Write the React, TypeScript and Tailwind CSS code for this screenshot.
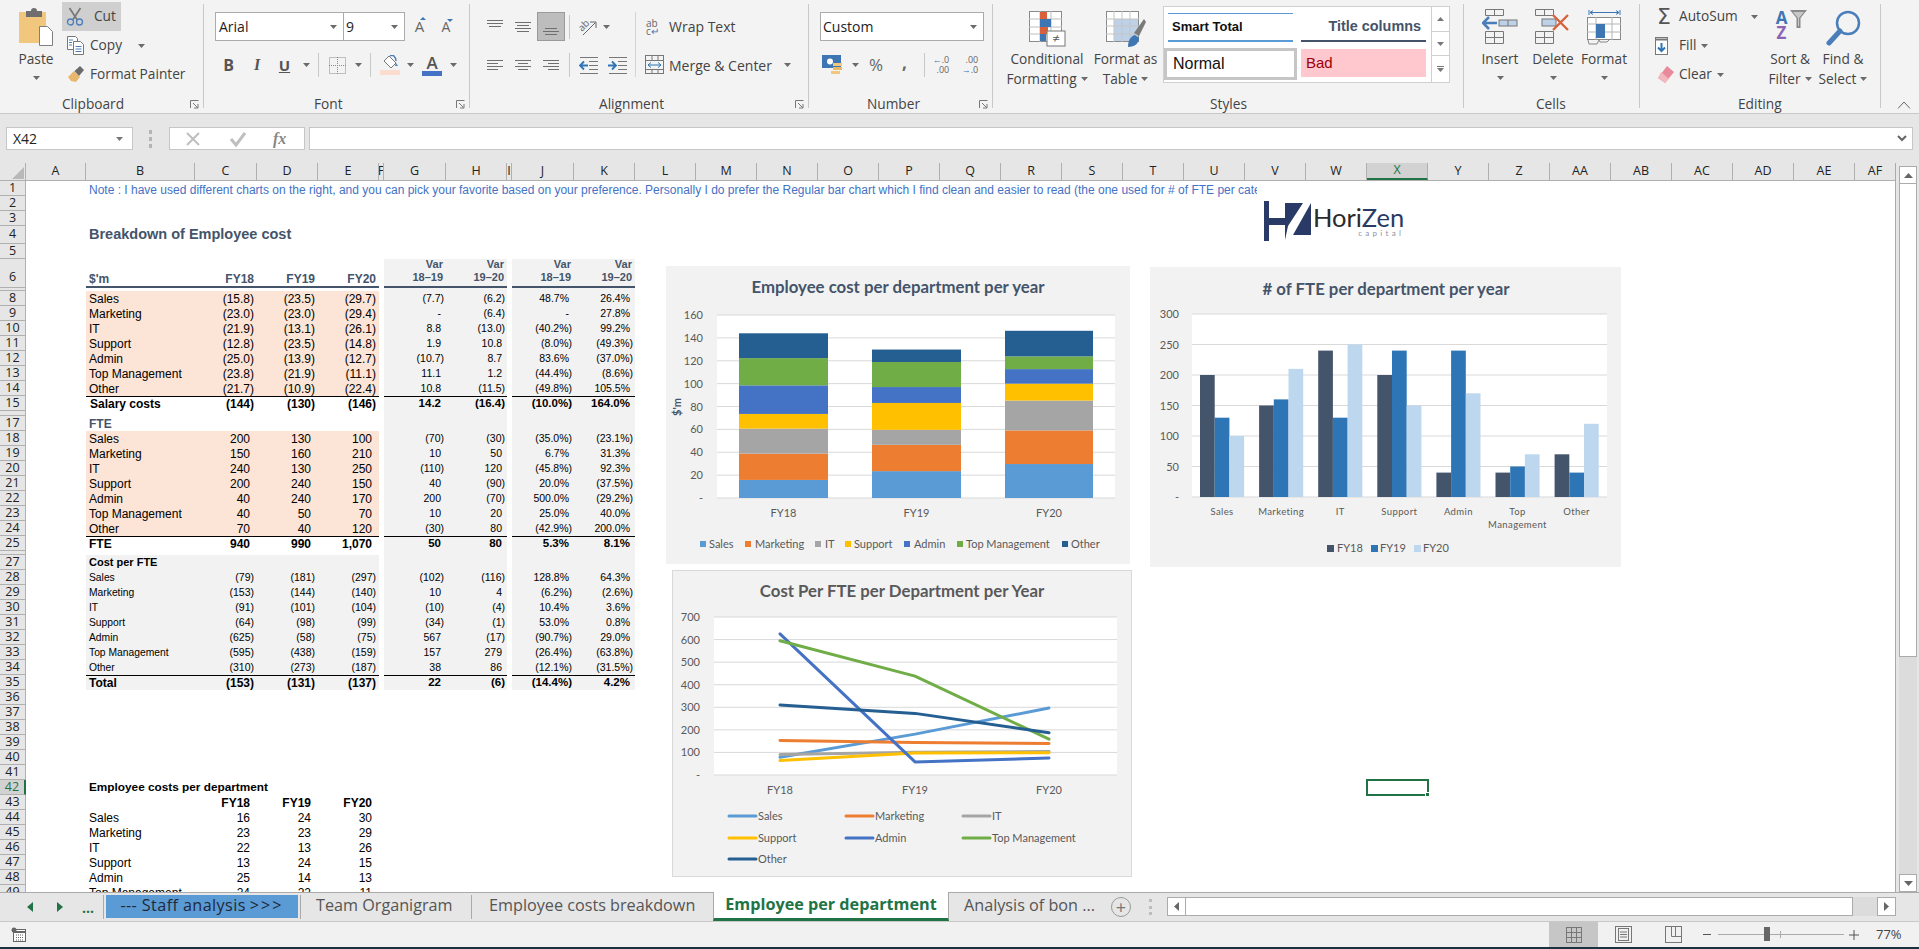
import React from 'react';

const Caret = ({ c = '#6b6b6b' }: { c?: string }) => (
  <svg width="7" height="4" viewBox="0 0 7 4" className="shrink-0"><path d="M0 0h7L3.5 4z" fill={c} /></svg>
);
const S = ({ cls, children }: { cls: string; children?: React.ReactNode }) => (
  <div className={`flex items-center justify-center shrink-0 ${cls}`}>{children}</div>
);
const VSep = ({ cls = 'h-[24px]' }: { cls?: string }) => <div className={`w-px bg-[#c8c8c8] ${cls}`} />;
const Launcher = ({ cls }: { cls: string }) => (
  <svg width="9" height="9" viewBox="0 0 9 9" className={`shrink-0 ml-auto ${cls}`} fill="none" stroke="#777">
    <path d="M.5 8V.5H8.5" /><path d="M3 3l4.5 4.5M4 8h4V4" />
  </svg>
);
const Lines = ({ rows, w = 18, h = 12 }: { rows: number[][]; w?: number; h?: number }) => (
  <svg width={w} height={h} viewBox={`0 0 ${w} ${h}`} stroke="#6f6f6f" strokeWidth="1">
    {rows.map((r, i) => <line key={i} x1={r[0]} x2={r[1]} y1={r[2] + 0.5} y2={r[2] + 0.5} />)}
  </svg>
);

const PasteIcon = () => (
  <svg width="34" height="38" viewBox="0 0 34 38">
    <rect x="0" y="4" width="27" height="31" fill="#f0c77c" />
    <path d="M7 3h5a3 3 0 0 1 6 0h5v6H7z" fill="#6e6e6e" />
    <path d="M20.5 18.5h8l5 5v14h-13z" fill="#fff" stroke="#7f7f7f" />
  </svg>
);
const Scissors = () => (
  <svg width="18" height="19" viewBox="0 0 18 19" fill="none">
    <path d="M3.5 1l7.5 11.5M14.5 1L7 12.5" stroke="#777" strokeWidth="1.7" />
    <circle cx="4.5" cy="15" r="3" stroke="#4a7ebb" strokeWidth="1.3" />
    <circle cx="13.5" cy="15" r="3" stroke="#4a7ebb" strokeWidth="1.3" />
  </svg>
);
const CopyIcon = () => (
  <svg width="17" height="19" viewBox="0 0 17 19" fill="#fff" stroke="#777">
    <path d="M.5.5h8l2 2v11h-10z" />
    <path d="M6.5 5.5h7l3 3v10h-10z" />
    <path d="M2 4h4M2 6.5h3M2 9h3M8.5 10.5h6M8.5 13h6M8.5 15.5h6" stroke="#4a7ebb" />
  </svg>
);
const Painter = () => (
  <svg width="18" height="17" viewBox="0 0 18 17">
    <path d="M1 11l6-6 6 6-4 5-5-1z" fill="#e9b66d" />
    <path d="M7.5 5L13 0l4 4-5 6z" fill="#6b6b6b" />
  </svg>
);
const BorderIcon = () => (
  <svg width="17" height="17" viewBox="0 0 17 17" fill="none" stroke="#8a8a8a" strokeDasharray="1 1">
    <rect x=".5" y=".5" width="16" height="16" /><path d="M8.5 0v17M0 8.5h17" />
  </svg>
);
const FillIcon = () => (
  <div className="flex flex-col items-center w-[20px]">
    <svg width="18" height="15" viewBox="0 0 18 15" fill="none">
      <path d="M8 1l7 7-5 5-7-7z" fill="#fff" stroke="#777" />
      <path d="M9 1c3-2 6 1 6 5" stroke="#4a7ebb" strokeWidth="1.5" />
      <path d="M15 8l2 3-3 0z" fill="#4a7ebb" />
    </svg>
    <div className="w-[20px] h-[5px] bg-[#fbdcce]" />
  </div>
);
const OrientIcon = () => (
  <svg width="20" height="20" viewBox="0 0 20 20" fill="none">
    <text x="1" y="12" fontSize="10" fontFamily="Open Sans" fill="#666" transform="rotate(-45 6 10)">ab</text>
    <path d="M5 18L17 6M12 5h6v6" stroke="#666" />
  </svg>
);
const Indent = ({ rev }: { rev?: boolean }) => (
  <svg width="19" height="17" viewBox="0 0 19 17" fill="none" stroke="#777">
    <path d="M1 .5h18M10 4.5h9M10 8.5h9M10 12.5h9M1 16.5h18" />
    {rev ? <path d="M1 8.5h8M5 4.5l-4 4 4 4" stroke="#2e75b6" strokeWidth="1.8" /> : <path d="M0 8.5h7M4 4.5l4 4-4 4" stroke="#2e75b6" strokeWidth="1.8" />}
  </svg>
);
const MergeIcon = () => (
  <svg width="20" height="20" viewBox="0 0 20 20" fill="none" stroke="#777">
    <rect x=".5" y=".5" width="18" height="18" />
    <path d="M.5 5.5h18M.5 14.5h18M7 .5v5M13 .5v5M7 14.5v4M13 14.5v4" />
    <path d="M3 10h13M6 7.5L3 10l3 2.5M13 7.5l3 2.5-3 2.5" stroke="#2e75b6" />
  </svg>
);
const Money = () => (
  <svg width="22" height="21" viewBox="0 0 22 21">
    <rect x="0" y="0" width="19" height="13" fill="#3e76b4" />
    <circle cx="8" cy="6.5" r="3" fill="#fff" />
    <rect x="11" y="8" width="9" height="3" fill="#f0c77c" /><rect x="11" y="12" width="9" height="3" fill="#eab765" />
    <rect x="9" y="16" width="9" height="3" fill="#f0c77c" />
  </svg>
);
const CondIcon = () => (
  <svg width="37" height="36" viewBox="0 0 37 36">
    <rect x=".5" y=".5" width="32" height="30" fill="#fff" stroke="#8a8a8a" />
    <path d="M11 0v31M22 0v31M0 8h33M0 16h33M0 23h33" stroke="#bdbdbd" fill="none" />
    <rect x="11" y="1" width="7" height="7" fill="#d9603a" /><rect x="11" y="8" width="11" height="8" fill="#3e76b4" />
    <rect x="11" y="16" width="8" height="7" fill="#d9603a" /><rect x="11" y="23" width="6" height="7" fill="#3e76b4" />
    <rect x="18" y="20" width="18" height="15" fill="#fff" stroke="#777" />
    <text x="27" y="32" fontSize="13" textAnchor="middle" fill="#555" fontFamily="Open Sans">≠</text>
  </svg>
);
const TableIcon = () => (
  <svg width="40" height="36" viewBox="0 0 40 36">
    <rect x=".5" y=".5" width="32" height="30" fill="#fff" stroke="#8a8a8a" />
    <rect x="8" y="8" width="24" height="22" fill="#bdd2e8" />
    <path d="M8 0v31M16 0v31M24 0v31M0 8h33M0 15h33M0 23h33" stroke="#c4c4c4" fill="none" />
    <path d="M28 22L38 8l2 3-7 14z" fill="#7a7a7a" />
    <path d="M22 36c0-7 3-11 7-12l4 3c0 5-4 9-11 9z" fill="#3e76b4" />
  </svg>
);
const InsertIcon = () => (
  <svg width="36" height="36" viewBox="0 0 36 36" fill="none" stroke="#777">
    <path d="M3.5.5h18v6h-18zM12.5.5v6M3.5 22.5h18v12h-18zM3.5 28.5h18M12.5 22.5v12" />
    <rect x="17" y="11" width="18" height="6" fill="#bdd2e8" /><path d="M26 11v6" />
    <path d="M1 14h14M7 8l-6 6 6 6" stroke="#4a7ebb" strokeWidth="2.5" />
  </svg>
);
const DeleteIcon = () => (
  <svg width="36" height="36" viewBox="0 0 36 36" fill="none" stroke="#777">
    <path d="M.5.5h18v6H.5zM9.5.5v6M.5 22.5h18v12H.5zM.5 28.5h18M9.5 22.5v12" />
    <rect x="7" y="10" width="14" height="7" fill="#bdd2e8" />
    <path d="M18 6l15 15M33 6L18 21" stroke="#d9603a" strokeWidth="2.3" />
  </svg>
);
const FormatIcon = () => (
  <svg width="35" height="37" viewBox="0 0 35 37" fill="none" stroke="#888">
    <path d="M2 1v5M33 1v5M3 3.5h29M3 3.5l3-2M3 3.5l3 2M32 3.5l-3-2M32 3.5l-3 2" stroke="#3e76b4" />
    <rect x=".5" y="8.5" width="33" height="22" fill="#fff" />
    <path d="M9 8v23M25 8v23M0 15h34M0 23h34" stroke="#b5b5b5" />
    <rect x="9" y="15" width="9" height="14" fill="#3e76b4" stroke="none" />
    <path d="M1 31l1 4h8l2-4M12 31l1 2h7l2-2" />
  </svg>
);
const FillDown = () => (
  <svg width="13" height="18" viewBox="0 0 13 18" fill="#fff" stroke="#777">
    <rect x=".5" y=".5" width="12" height="17" /><path d="M0 2.5h13" strokeWidth="2" />
    <path d="M6.5 6v8M3 10.5L6.5 14 10 10.5" stroke="#2e75b6" strokeWidth="2" fill="none" />
  </svg>
);
const Eraser = () => (
  <svg width="17" height="18" viewBox="0 0 17 18">
    <path d="M10 0l7 6-9 11-7-5z" fill="#e98a9a" /><path d="M4 6l8 7-4 4-7-5z" fill="#f2b8c0" />
  </svg>
);
const Funnel = () => (
  <svg width="17" height="18" viewBox="0 0 17 18">
    <path d="M0 0h17L10.5 8v10h-4V8z" fill="#8a8a8a" />
    <path d="M3 2h11l-5 6v8H8V8z" fill="#c8c8c8" />
  </svg>
);
const Magnifier = () => (
  <svg width="35" height="36" viewBox="0 0 35 36" fill="none">
    <circle cx="22" cy="13" r="11" stroke="#4a7ebb" strokeWidth="2.5" />
    <path d="M14 21L3 33" stroke="#4a7ebb" strokeWidth="5" strokeLinecap="round" />
  </svg>
);

const TextRow = ({ cls, children }: { cls?: string; children: React.ReactNode }) => (
  <div className={`h-[20px] leading-[20px] whitespace-nowrap flex items-center justify-center gap-[4px] ${cls ?? ''}`}>{children}</div>
);

const Group = ({ cls, label, labelCls, launch, children }: { cls: string; label: string; labelCls: string; launch?: string; children: React.ReactNode }) => (
  <div className={`h-[104px] shrink-0 flex flex-col border-r border-[#c8c8c8] ${cls}`}>
    <div className="h-[93px] shrink-0 flex">{children}</div>
    <div className={`h-[14px] shrink-0 leading-[14px] flex items-center whitespace-nowrap ${labelCls}`}>
      <span>{label}</span>
      {launch && <Launcher cls={launch} />}
    </div>
  </div>
);

const ARIAL = 'font-[Liberation_Sans,Arial,sans-serif]';

function Ribbon() {
  return (
    <div className="h-[114px] shrink-0 bg-[#f3f3f3] border-b border-[#c8c8c8] pt-[4px] flex">
      <Group cls="w-[204px]" label="Clipboard" labelCls="pl-[62px]" launch="mr-[4px]">
        <div className="w-[62px] pl-[10px] flex flex-col items-center pt-[4px]">
          <PasteIcon />
          <div className="mt-[4px] h-[18px] leading-[18px]">Paste</div>
          <div className="mt-[8px]"><Caret /></div>
        </div>
        <div className="flex flex-col -mt-[2px]">
          <div className="w-[59px] h-[29px] bg-[#cfcfcf] flex items-center pl-[4px] gap-[10px]"><Scissors /><span>Cut</span></div>
          <div className="h-[29px] flex items-center pl-[5px] gap-[6px]"><CopyIcon /><span>Copy</span><div className="ml-[10px]"><Caret /></div></div>
          <div className="h-[29px] flex items-center pl-[5px] gap-[5px] whitespace-nowrap"><Painter /><span>Format Painter</span></div>
        </div>
      </Group>

      <Group cls="w-[266px]" label="Font" labelCls="pl-[110px]" launch="mr-[4px]">
        <div className="pl-[11px] pt-[8px] flex flex-col">
          <div className="flex h-[29px]">
            <div className="w-[129px] border border-[#ababab] bg-white flex items-center pl-[3px] pr-[6px] text-[#222] text-[14px] justify-between"><span>Arial</span><Caret /></div>
            <div className="w-[62px] -ml-px border border-[#ababab] bg-white flex items-center pl-[2px] pr-[6px] text-[#222] text-[14px] justify-between"><span>9</span><Caret /></div>
            <S cls="w-[29px]">
              <span className="text-[15px] text-[#666] relative">A<svg width="6" height="3" viewBox="0 0 6 3" className="absolute -right-[2px] top-[2px]"><path d="M0 3l3-3 3 3z" fill="#3e76b4" /></svg></span>
            </S>
            <S cls="w-[24px]">
              <span className="text-[14px] text-[#666] relative">A<svg width="6" height="3" viewBox="0 0 6 3" className="absolute -right-[3px] top-[3px]"><path d="M0 0h6L3 3z" fill="#3e76b4" /></svg></span>
            </S>
          </div>
          <div className="flex h-[24px] mt-[12px]">
            <S cls="w-[27px] font-bold text-[16px] text-[#555]">B</S>
            <S cls="w-[30px] italic font-bold text-[16px] text-[#555] font-[Liberation_Serif,serif]">I</S>
            <S cls="w-[25px] font-bold text-[15px] text-[#555] underline">U</S>
            <S cls="w-[18px]"><Caret /></S>
            <S cls="w-[6px]"><VSep /></S>
            <S cls="w-[32px]"><BorderIcon /></S>
            <S cls="w-[10px]"><Caret /></S>
            <S cls="w-[14px]"><VSep /></S>
            <S cls="w-[26px]"><FillIcon /></S>
            <S cls="w-[14px]"><Caret /></S>
            <S cls="w-[30px]">
              <div className="flex flex-col items-center"><span className="text-[17px] leading-[17px] font-semibold text-[#555]">A</span><div className="w-[20px] h-[5px] bg-[#4472c4]" /></div>
            </S>
            <S cls="w-[12px]"><Caret /></S>
          </div>
        </div>
      </Group>

      <Group cls="w-[339px]" label="Alignment" labelCls="pl-[129px]" launch="mr-[4px]">
        <div className="pl-[11px] pt-[8px] w-[165px] flex flex-col">
          <div className="flex h-[29px]">
            <S cls="w-[28px] pb-[7px]"><Lines rows={[[1, 17, 1], [1, 17, 4], [3, 15, 7]]} h={8} /></S>
            <S cls="w-[28px]"><Lines rows={[[1, 17, 1], [3, 15, 4], [1, 17, 7], [3, 15, 10]]} /></S>
            <S cls="w-[28px] bg-[#bdbdbd] border border-[#9a9a9a] pt-[8px]"><Lines rows={[[3, 15, 1], [1, 17, 4], [3, 15, 7]]} h={8} /></S>
            <S cls="w-[8px]"><VSep /></S>
            <S cls="w-[30px]"><OrientIcon /></S>
            <S cls="w-[6px]"><Caret /></S>
          </div>
          <div className="flex h-[24px] mt-[12px]">
            <S cls="w-[28px]"><Lines rows={[[1, 17, 1], [1, 12, 4], [1, 17, 7], [1, 12, 10]]} /></S>
            <S cls="w-[28px]"><Lines rows={[[1, 17, 1], [4, 14, 4], [1, 17, 7], [4, 14, 10]]} /></S>
            <S cls="w-[28px]"><Lines rows={[[1, 17, 1], [6, 17, 4], [1, 17, 7], [6, 17, 10]]} /></S>
            <S cls="w-[8px]"><VSep /></S>
            <S cls="w-[30px]"><Indent rev /></S>
            <S cls="w-[28px]"><Indent /></S>
          </div>
        </div>
        <div className="mt-[8px] w-px h-[65px] bg-[#d4d4d4]" />
        <div className="pt-[8px] flex flex-col">
          <div className="h-[29px] flex items-center pl-[10px] whitespace-nowrap text-[14px]">
            <div className="w-[23px] leading-[8px] text-[10px] text-[#666]">ab<br />c<span className="text-[#3e76b4]">↵</span></div>
            <span>Wrap Text</span>
          </div>
          <div className="h-[24px] mt-[12px] flex items-center pl-[9px] whitespace-nowrap text-[14px]">
            <div className="w-[24px]"><MergeIcon /></div>
            <span>Merge &amp; Center</span>
            <div className="ml-[12px]"><Caret /></div>
          </div>
        </div>
      </Group>

      <Group cls="w-[184px]" label="Number" labelCls="pl-[58px]" launch="mr-[4px]">
        <div className="pl-[11px] pt-[8px] flex flex-col">
          <div className="w-[164px] h-[29px] border border-[#ababab] bg-white flex items-center justify-between pl-[2px] pr-[6px] text-[14px] text-[#222]"><span>Custom</span><Caret /></div>
          <div className="flex h-[24px] mt-[12px]">
            <S cls="w-[26px]"><Money /></S>
            <S cls="w-[18px]"><Caret /></S>
            <S cls="w-[24px] text-[17px] text-[#666]">%</S>
            <S cls="w-[33px] text-[17px] font-bold text-[#666] pb-[4px]">,</S>
            <S cls="w-[6px]"><VSep /></S>
            <S cls="w-[28px]"><div className="text-[9px] leading-[10px] text-[#666] text-right"><span className="text-[#3e76b4]">←</span>.0<br />.00</div></S>
            <S cls="w-[30px]"><div className="text-[9px] leading-[10px] text-[#666] text-right">.00<br /><span className="text-[#3e76b4]">→</span>.0</div></S>
          </div>
        </div>
      </Group>

      <Group cls="w-[471px]" label="Styles" labelCls="pl-[217px]">
        <div className="ml-[13px] w-[82px] pt-[7px] flex flex-col items-center">
          <div className="h-[36px] mb-[2px]"><CondIcon /></div>
          <TextRow>Conditional</TextRow>
          <TextRow>Formatting<Caret /></TextRow>
        </div>
        <div className="w-[75px] pt-[7px] flex flex-col items-center">
          <div className="h-[36px] mb-[2px]"><TableIcon /></div>
          <TextRow>Format as</TextRow>
          <TextRow>Table<Caret /></TextRow>
        </div>
        <div className="mt-[2px] w-[287px] h-[77px] border border-[#d0d0d0] bg-white flex">
          <div className="w-[268px] flex flex-col">
            <div className={`mt-[6px] ml-[4px] flex h-[29px] font-bold text-[13px] ${ARIAL}`}>
              <div className="w-[125px] border-t border-b-2 border-[#5b9bd5] flex items-center pl-[4px] text-[#111] text-[13px]">Smart Total</div>
              <div className="ml-[8px] w-[125px] border-b-2 border-[#44546a] flex items-center justify-end pr-[5px] text-[#44546a] text-[14.4px]">Title columns</div>
            </div>
            <div className={`mt-[6px] flex h-[32px] text-[16px] ${ARIAL}`}>
              <div className="w-[133px] border-[3px] border-[#c6c6c6] flex items-center pl-[6px] text-[#111]">Normal</div>
              <div className="ml-[4px] mt-px w-[125px] h-[28px] bg-[#ffc7ce] flex items-center pl-[5px] text-[#9c0006] text-[15px]">Bad</div>
            </div>
          </div>
          <div className="w-[18px] border-l border-[#d0d0d0] flex flex-col">
            <S cls="h-[25px] border-b border-[#d0d0d0]"><svg width="7" height="4" viewBox="0 0 7 4"><path d="M0 4h7L3.5 0z" fill="#777" /></svg></S>
            <S cls="h-[24px] border-b border-[#d0d0d0]"><Caret c="#777" /></S>
            <S cls="flex-1 flex-col gap-[1px]"><div className="w-[7px] h-px bg-[#777]" /><Caret c="#777" /></S>
          </div>
        </div>
      </Group>

      <Group cls="w-[176px]" label="Cells" labelCls="pl-[72px]">
        {[
          { t: 'Insert', cls: 'ml-[10px] w-[52px]', i: <InsertIcon /> },
          { t: 'Delete', cls: 'w-[54px]', i: <DeleteIcon /> },
          { t: 'Format', cls: 'w-[48px]', i: <FormatIcon /> },
        ].map((x) => (
          <div key={x.t} className={`${x.cls} pt-[5px] flex flex-col items-center`}>
            <div className="h-[36px] mb-[4px]">{x.i}</div>
            <TextRow>{x.t}</TextRow>
            <div className="mt-[7px]"><Caret /></div>
          </div>
        ))}
      </Group>

      <Group cls="w-[241px]" label="Editing" labelCls="pl-[98px]">
        <div className="w-[122px] pl-[15px] -mt-[2px] flex flex-col">
          <div className="h-[29px] flex items-center"><span className="w-[24px] pl-[2px] text-[22px] leading-none text-[#555] font-[DejaVu_Sans,sans-serif]">Σ</span><span>AutoSum</span><div className="ml-[13px]"><Caret /></div></div>
          <div className="h-[29px] flex items-center"><div className="w-[24px]"><FillDown /></div><span>Fill</span><div className="ml-[5px]"><Caret /></div></div>
          <div className="h-[29px] flex items-center"><div className="w-[24px] pl-[2px]"><Eraser /></div><span>Clear</span><div className="ml-[5px]"><Caret /></div></div>
        </div>
        <div className="w-[56px] pt-[6px] flex flex-col items-center">
          <div className="h-[33px] mb-[6px] flex">
            <div className="flex flex-col items-center leading-[15px] text-[17px] font-bold w-[17px]"><span className="text-[#3e76b4]">A</span><span className="text-[#8d63b5]">Z</span></div>
            <Funnel />
          </div>
          <TextRow>Sort &amp;</TextRow>
          <TextRow>Filter<Caret /></TextRow>
        </div>
        <div className="w-[50px] pt-[6px] flex flex-col items-center">
          <div className="h-[36px] mb-[3px]"><Magnifier /></div>
          <TextRow>Find &amp;</TextRow>
          <TextRow>Select<Caret /></TextRow>
        </div>
      </Group>

      <svg width="14" height="8" viewBox="0 0 14 8" fill="none" stroke="#666" className="ml-[16px] mt-[97px]"><path d="M1 7.5L7 1l6 6.5" /></svg>
    </div>
  );
}

function FormulaBar() {
  return (
    <div className="h-[49px] shrink-0 bg-[#e6e6e6] pt-[13px] flex">
      <div className="ml-[6px] w-[127px] h-[23px] bg-white border border-[#c6c6c6] flex items-center justify-between pl-[6px] pr-[9px] text-[#222] text-[14px]"><span>X42</span><Caret c="#777" /></div>
      <div className="ml-[16px] w-[3px] h-[18px] mt-[3px] border-y-[4px] border-[#b5b5b5] bg-[#e6e6e6] flex items-center"><div className="w-[3px] h-[4px] bg-[#b5b5b5]" /></div>
      <div className="ml-[17px] w-[136px] h-[23px] bg-white border border-[#c6c6c6] flex items-center">
        <svg width="16" height="16" viewBox="0 0 16 16" className="ml-[15px]" stroke="#bfbfbf" strokeWidth="2" fill="none"><path d="M2 2l12 12M14 2L2 14" /></svg>
        <svg width="18" height="16" viewBox="0 0 18 16" className="ml-[28px]" stroke="#bfbfbf" strokeWidth="3" fill="none"><path d="M2 8l5 6L16 2" /></svg>
        <span className="ml-[26px] font-[Liberation_Serif,serif] italic font-bold text-[16px] text-[#888]">fx</span>
      </div>
      <div className="ml-[4px] w-[1604px] h-[23px] bg-white border border-[#c6c6c6] flex items-center justify-end pr-[5px]">
        <svg width="10" height="7" viewBox="0 0 10 7" fill="none" stroke="#666" strokeWidth="2"><path d="M1 1l4 4 4-4" /></svg>
      </div>
    </div>
  );
}

const cols: [string, string][] = [
  ['A', 'w-[60px]'], ['B', 'w-[109px]'], ['C', 'w-[62px]'], ['D', 'w-[61px]'], ['E', 'w-[61px]'], ['F', 'w-[5px]'], ['G', 'w-[62px]'], ['H', 'w-[61px]'], ['I', 'w-[5px]'], ['J', 'w-[62px]'], ['K', 'w-[61px]'],
  ['L', 'w-[61px]'], ['M', 'w-[61px]'], ['N', 'w-[61px]'], ['O', 'w-[61px]'], ['P', 'w-[61px]'], ['Q', 'w-[61px]'], ['R', 'w-[61px]'], ['S', 'w-[61px]'], ['T', 'w-[61px]'], ['U', 'w-[61px]'], ['V', 'w-[61px]'], ['W', 'w-[61px]'], ['X', 'w-[61px]'], ['Y', 'w-[61px]'], ['Z', 'w-[61px]'], ['AA', 'w-[61px]'], ['AB', 'w-[61px]'], ['AC', 'w-[61px]'], ['AD', 'w-[61px]'], ['AE', 'w-[61px]'], ['AF', 'w-[41px]'],
];

type Row = {
  n: string; h: string; left?: string; right?: boolean; top?: boolean; label?: string; labelCls?: string; c?: string[]; cCls?: string; v?: string[]; vCls?: string; under?: boolean; sel?: boolean; end?: boolean;
};
const PEACH = 'bg-[#fce4d6]';
const GREY = 'bg-[#f2f2f2]';
const H15 = 'h-[15px]';
const blk = 'font-bold text-black';
const peachRows = (rows: [string, string, string[], string[]][]): Row[] => rows.map(([n, label, c, v]) => ({ n, h: H15, left: PEACH, right: true, label, labelCls: 'text-[12px]', c, cCls: 'text-[12px]', v, vCls: 'text-[10.5px]' }));
const greyRows = (rows: [string, string, string[], string[]][]): Row[] => rows.map(([n, label, c, v]) => ({ n, h: H15, left: GREY, right: true, label, labelCls: 'text-[10.3px]', c, cCls: 'text-[10.5px]', v, vCls: 'text-[10.5px]' }));
const plainRows = (rows: [string, string, string[]][]): Row[] => rows.map(([n, label, c]) => ({ n, h: H15, label, labelCls: 'text-[12px]', c, cCls: 'text-[12px]' }));

const rows: Row[] = [
  { n: '1', h: H15 }, { n: '2', h: H15 }, { n: '3', h: H15 },
  { n: '4', h: 'h-[18px]', label: 'Breakdown of Employee cost', labelCls: 'font-bold text-[14.5px] text-[#44546a]' },
  { n: '5', h: H15 },
  { n: '6', h: 'h-[29px]', right: true, under: true, label: "$'m", labelCls: 'font-bold text-[12px] leading-[14px] text-[#44546a] self-end', c: ['FY18', 'FY19', 'FY20'], cCls: 'font-bold text-[12px] leading-[14px] text-[#44546a] self-end', end: true },
  { n: '', h: 'h-[3px]', right: true },
  ...peachRows([
    ['8', 'Sales', ['(15.8)', '(23.5)', '(29.7)'], ['(7.7)', '(6.2)', '48.7%', '26.4%']],
    ['9', 'Marketing', ['(23.0)', '(23.0)', '(29.4)'], ['-', '(6.4)', '-', '27.8%']],
    ['10', 'IT', ['(21.9)', '(13.1)', '(26.1)'], ['8.8', '(13.0)', '(40.2%)', '99.2%']],
    ['11', 'Support', ['(12.8)', '(23.5)', '(14.8)'], ['1.9', '10.8', '(8.0%)', '(49.3%)']],
    ['12', 'Admin', ['(25.0)', '(13.9)', '(12.7)'], ['(10.7)', '8.7', '83.6%', '(37.0%)']],
    ['13', 'Top Management', ['(23.8)', '(21.9)', '(11.1)'], ['11.1', '1.2', '(44.4%)', '(8.6%)']],
    ['14', 'Other', ['(21.7)', '(10.9)', '(22.4)'], ['10.8', '(11.5)', '(49.8%)', '105.5%']],
  ]),
  { n: '15', h: H15, top: true, right: true, label: 'Salary costs', labelCls: `${blk} text-[12px] pl-[1px]`, c: ['(144)', '(130)', '(146)'], cCls: `${blk} text-[12px]`, v: ['14.2', '(16.4)', '(10.0%)', '164.0%'], vCls: `${blk} text-[11.5px]` },
  { n: '', h: 'h-[5px]', right: true },
  { n: '17', h: H15, right: true, label: 'FTE', labelCls: 'font-bold text-[12px] text-[#44546a]' },
  ...peachRows([
    ['18', 'Sales', ['200', '130', '100'], ['(70)', '(30)', '(35.0%)', '(23.1%)']],
    ['19', 'Marketing', ['150', '160', '210'], ['10', '50', '6.7%', '31.3%']],
    ['20', 'IT', ['240', '130', '250'], ['(110)', '120', '(45.8%)', '92.3%']],
    ['21', 'Support', ['200', '240', '150'], ['40', '(90)', '20.0%', '(37.5%)']],
    ['22', 'Admin', ['40', '240', '170'], ['200', '(70)', '500.0%', '(29.2%)']],
    ['23', 'Top Management', ['40', '50', '70'], ['10', '20', '25.0%', '40.0%']],
    ['24', 'Other', ['70', '40', '120'], ['(30)', '80', '(42.9%)', '200.0%']],
  ]),
  { n: '25', h: H15, top: true, right: true, label: 'FTE', labelCls: `${blk} text-[12px]`, c: ['940', '990', '1,070'], cCls: `${blk} text-[12px]`, v: ['50', '80', '5.3%', '8.1%'], vCls: `${blk} text-[11.5px]` },
  { n: '', h: 'h-[4px]', right: true },
  { n: '27', h: H15, left: GREY, right: true, label: 'Cost per FTE', labelCls: `${blk} text-[11px]` },
  ...greyRows([
    ['28', 'Sales', ['(79)', '(181)', '(297)'], ['(102)', '(116)', '128.8%', '64.3%']],
    ['29', 'Marketing', ['(153)', '(144)', '(140)'], ['10', '4', '(6.2%)', '(2.6%)']],
    ['30', 'IT', ['(91)', '(101)', '(104)'], ['(10)', '(4)', '10.4%', '3.6%']],
    ['31', 'Support', ['(64)', '(98)', '(99)'], ['(34)', '(1)', '53.0%', '0.8%']],
    ['32', 'Admin', ['(625)', '(58)', '(75)'], ['567', '(17)', '(90.7%)', '29.0%']],
    ['33', 'Top Management', ['(595)', '(438)', '(159)'], ['157', '279', '(26.4%)', '(63.8%)']],
    ['34', 'Other', ['(310)', '(273)', '(187)'], ['38', '86', '(12.1%)', '(31.5%)']],
  ]),
  { n: '35', h: H15, left: GREY, top: true, right: true, label: 'Total', labelCls: `${blk} text-[12px]`, c: ['(153)', '(131)', '(137)'], cCls: `${blk} text-[12px]`, v: ['22', '(6)', '(14.4%)', '4.2%'], vCls: `${blk} text-[11.5px]` },
  { n: '36', h: H15 }, { n: '37', h: H15 }, { n: '38', h: H15 }, { n: '39', h: H15 }, { n: '40', h: H15 }, { n: '41', h: H15 },
  { n: '42', h: H15, sel: true, label: 'Employee costs per department', labelCls: `${blk} text-[11.8px] whitespace-nowrap` },
  { n: '43', h: H15, c: ['FY18', 'FY19', 'FY20'], cCls: `${blk} text-[12px]` },
  ...plainRows([
    ['44', 'Sales', ['16', '24', '30']],
    ['45', 'Marketing', ['23', '23', '29']],
    ['46', 'IT', ['22', '13', '26']],
    ['47', 'Support', ['13', '24', '15']],
    ['48', 'Admin', ['25', '14', '13']],
    ['49', 'Top Management', ['24', '22', '11']],
  ]),
];

const pad = (s: string) => (s.endsWith(')') ? 'pr-[2px]' : 'pr-[5px]');

function SheetRow({ r }: { r: Row }) {
  const l = `${r.left ?? ''} ${r.top ? 'border-t border-black' : ''} ${r.under ? 'border-b-2 border-[#44546a]' : ''}`;
  const g = `${r.right ? GREY : ''} ${r.top ? 'border-t border-black' : ''} ${r.under ? 'border-b-2 border-[#44546a]' : ''}`;
  const widthsC = ['w-[62px]', 'w-[61px]', 'w-[61px]'];
  const Var = (s: string | undefined, w: string, top?: string, bot?: string) => (
    <div className={`${w} shrink-0 ${g} flex items-center justify-end ${s ? pad(s) : ''} ${r.vCls ?? ''} whitespace-nowrap`}>
      {s}
      {top && <div className="flex flex-col items-end pr-[3px] pb-[4px] font-bold text-[11px] leading-[13px] text-[#44546a]"><span>{top}</span><span>{bot}</span></div>}
    </div>
  );
  return (
    <div className={`flex shrink-0 ${r.h} text-black`}>
      <div className={`w-[26px] shrink-0 border-r border-b flex justify-center font-[Open_Sans,sans-serif] text-[12.5px] ${r.end ? 'items-end' : 'items-center'} ${r.sel ? 'bg-[#d2d2d2] border-b-[#b0b0b0] border-r-2 border-r-[#217346] text-[#217346]' : 'bg-[#e6e6e6] border-[#b0b0b0] text-[#222]'}`}>{r.n}</div>
      <div className="w-[60px] shrink-0" />
      <div className={`w-[109px] shrink-0 ${l} flex items-center overflow-visible whitespace-nowrap pl-[3px]`}>
        <span className={r.labelCls}>{r.label}</span>
      </div>
      {widthsC.map((w, i) => {
        const s = r.c?.[i];
        const pr = s ? (s.endsWith(')') || r.end ? 'pr-[3px]' : 'pr-[7px]') : '';
        return <div key={i} className={`${w} shrink-0 ${l} flex items-center justify-end ${pr}`}><span className={r.cCls}>{s}</span></div>;
      })}
      <div className="w-[5px] shrink-0" />
      {r.end ? Var(undefined, 'w-[62px]', 'Var', '18–19') : Var(r.v?.[0], 'w-[62px]')}
      {r.end ? Var(undefined, 'w-[61px]', 'Var', '19–20') : Var(r.v?.[1], 'w-[61px]')}
      <div className="w-[5px] shrink-0" />
      {r.end ? Var(undefined, 'w-[62px]', 'Var', '18–19') : Var(r.v?.[2], 'w-[62px]')}
      {r.end ? Var(undefined, 'w-[61px]', 'Var', '19–20') : Var(r.v?.[3], 'w-[61px]')}
    </div>
  );
}

const COLORS = { Sales: '#5b9bd5', Marketing: '#ed7d31', IT: '#a5a5a5', Support: '#ffc000', Admin: '#4472c4', 'Top Management': '#70ad47', Other: '#255e91' };
const SERIES = Object.keys(COLORS) as (keyof typeof COLORS)[];

function StackChart() {
  const data: [number, number, string, number[]][] = [
    [739, 89, 'FY18', [15.8, 23, 21.9, 12.8, 25, 23.8, 21.7]],
    [872, 89, 'FY19', [23.5, 23, 13.1, 23.5, 13.9, 21.9, 10.9]],
    [1005, 88, 'FY20', [29.7, 29.4, 26.1, 14.8, 12.7, 11.1, 22.4]],
  ];
  const k = 183 / 160;
  const legend: [number, number][] = [[700, 709], [745, 755], [815, 825], [845, 854], [904, 914], [957, 966], [1062, 1071]];
  return (
    <svg width="464" height="298" viewBox="666 266 464 298" fontFamily="Lato, sans-serif" className="block">
      <rect x="717" y="315" width="398" height="183" fill="#fff" />
      {[0, 20, 40, 60, 80, 100, 120, 140, 160].map((v) => {
        const y = 498 - v * k;
        return <g key={v}><line x1="717" x2="1115" y1={y} y2={y} stroke="#d9d9d9" /><text x="703" y={y + 4} textAnchor="end" fontSize="11" fill="#595959">{v === 0 ? '-' : v}</text></g>;
      })}
      {data.map(([x, w, name, vals]) => {
        let acc = 0;
        return (
          <g key={name}>
            {vals.map((v, i) => {
              const y = 498 - (acc + v) * k;
              acc += v;
              return <rect key={i} x={x} width={w} y={y} height={v * k} fill={COLORS[SERIES[i]]} />;
            })}
            <text x={x + w / 2} y="517" textAnchor="middle" fontSize="11" fill="#595959">{name}</text>
          </g>
        );
      })}
      <text x="898" y="293" textAnchor="middle" fontSize="16.8" fontWeight="700" fill="#44546a">Employee cost per department per year</text>
      <text transform="translate(681 407) rotate(-90)" textAnchor="middle" fontSize="11" fontWeight="700" fill="#44546a">$'m</text>
      {SERIES.map((s, i) => (
        <g key={s}><rect x={legend[i][0]} y="541" width="6" height="6" fill={COLORS[s]} /><text x={legend[i][1]} y="548" fontSize="11" fill="#595959">{s}</text></g>
      ))}
    </svg>
  );
}

function BarChart() {
  const cats: [string, number[]][] = [
    ['Sales', [200, 130, 100]], ['Marketing', [150, 160, 210]], ['IT', [240, 130, 250]], ['Support', [200, 240, 150]], ['Admin', [40, 240, 170]], ['Top', [40, 50, 70]], ['Other', [70, 40, 120]],
  ];
  const colr = ['#44546a', '#2e75b6', '#bdd7ee'];
  const k = 183 / 300;
  return (
    <svg width="471" height="300" viewBox="1150 267 471 300" fontFamily="Lato, sans-serif" className="block">
      <rect x="1192" y="314" width="415" height="183" fill="#fff" />
      {[0, 50, 100, 150, 200, 250, 300].map((v) => {
        const y = 497 - v * k;
        return <g key={v}><line x1="1192" x2="1607" y1={y} y2={y} stroke="#d9d9d9" /><text x="1179" y={y + 4} textAnchor="end" fontSize="11" fill="#595959">{v === 0 ? '-' : v}</text></g>;
      })}
      {cats.map(([name, vals], i) => {
        const x0 = 1200 + 59.1 * i;
        return (
          <g key={name}>
            {vals.map((v, j) => <rect key={j} x={x0 + j * 14.7} width="14.7" y={497 - v * k} height={v * k} fill={colr[j]} />)}
            <text x={x0 + 22} y="515" textAnchor="middle" fontSize="9.5" letterSpacing=".4" fill="#595959">{name}</text>
            {name === 'Top' && <text x={x0 + 22} y="528" textAnchor="middle" fontSize="9.5" letterSpacing=".4" fill="#595959">Management</text>}
          </g>
        );
      })}
      <text x="1386" y="295" textAnchor="middle" fontSize="16.8" fontWeight="700" fill="#44546a"># of FTE per department per year</text>
      {[[1327, 1337, 'FY18'], [1371, 1380, 'FY19'], [1414, 1423, 'FY20']].map((l, i) => (
        <g key={i}><rect x={l[0] as number} y="545" width="7" height="7" fill={colr[i]} /><text x={l[1] as number} y="552" fontSize="11" fill="#595959">{l[2]}</text></g>
      ))}
    </svg>
  );
}

function LineChart() {
  const xs = [780, 915, 1049];
  const k = 158 / 700;
  const d: number[][] = [[79, 181, 297], [153, 144, 140], [91, 101, 104], [64, 98, 99], [625, 58, 75], [595, 438, 159], [310, 273, 187]];
  const lg: [number, number][] = [[729, 816], [846, 816], [963, 816], [729, 838], [846, 838], [963, 838], [729, 859]];
  return (
    <svg width="458" height="305" viewBox="673 571 458 305" fontFamily="Lato, sans-serif" className="block">
      <rect x="714" y="617" width="403" height="158" fill="#fff" />
      {[0, 100, 200, 300, 400, 500, 600, 700].map((v) => {
        const y = 775 - v * k;
        return <g key={v}><line x1="714" x2="1117" y1={y} y2={y} stroke="#d9d9d9" /><text x="700" y={y + 4} textAnchor="end" fontSize="11" fill="#595959">{v === 0 ? '-' : v}</text></g>;
      })}
      {d.map((vals, i) => (
        <polyline key={i} points={vals.map((v, j) => `${xs[j]},${775 - v * k}`).join(' ')} fill="none" stroke={COLORS[SERIES[i]]} strokeWidth="3" strokeLinecap="round" strokeLinejoin="round" />
      ))}
      {['FY18', 'FY19', 'FY20'].map((t, i) => <text key={t} x={xs[i]} y="794" textAnchor="middle" fontSize="11" fill="#595959">{t}</text>)}
      <text x="902" y="597" textAnchor="middle" fontSize="16.8" fontWeight="700" fill="#595959">Cost Per FTE per Department per Year</text>
      {SERIES.map((s, i) => (
        <g key={s}><line x1={lg[i][0]} x2={lg[i][0] + 27} y1={lg[i][1]} y2={lg[i][1]} stroke={COLORS[s]} strokeWidth="3" strokeLinecap="round" /><text x={lg[i][0] + 29} y={lg[i][1] + 4} fontSize="11" fill="#595959">{s}</text></g>
      ))}
    </svg>
  );
}

const Logo = () => (
  <div className="flex items-start">
    <svg width="48" height="40" viewBox="0 0 48 40" fill="#2a3a66" className="shrink-0">
      <rect x="0" y="0" width="5" height="40" />
      <rect x="5" y="17" width="17" height="7" />
      <path d="M21 2h18L24 25l-3 14z" />
      <path d="M47 2v32H29z" />
    </svg>
    <div className="ml-[1px] flex flex-col items-end">
      <div className="font-[Lato,sans-serif] text-[25.5px] leading-[26px] mt-[3px] text-[#2b2b2b] whitespace-nowrap">Hori<span className="text-[#2a3a66]">Zen</span></div>
      <div className="font-[Lato,sans-serif] text-[8px] leading-[8px] tracking-[3.3px] text-[#8a92a6] -mt-[1px]">capital</div>
    </div>
  </div>
);

function Sheet() {
  return (
    <div className="w-[1896px] shrink-0 flex flex-col relative overflow-hidden bg-white border-r border-[#aaa]">
      <div className="h-[18px] shrink-0 flex bg-[#e6e6e6] border-b border-[#b0b0b0]">
        <div className="w-[26px] shrink-0 border-r border-[#b0b0b0] relative">
          <svg width="12" height="12" viewBox="0 0 12 12" className="absolute right-[1px] bottom-[1px]"><path d="M12 0v12H0z" fill="#b9b9b9" /></svg>
        </div>
        {cols.map(([n, w]) => (
          <div key={n} className={`${w} shrink-0 overflow-hidden flex items-center justify-center text-[12.5px] border-r border-[#b0b0b0] ${n === 'X' ? 'bg-[#d2d2d2] border-b-2 border-b-[#217346] text-[#217346]' : 'text-[#222]'}`}>{n}</div>
        ))}
      </div>
      <div className={`flex-1 min-h-0 overflow-hidden flex flex-col relative ${ARIAL}`}>
        {rows.map((r, i) => <SheetRow key={i} r={r} />)}
      </div>

      <div className={`absolute left-[89px] top-[20px] w-[1168px] overflow-hidden whitespace-nowrap text-[12px] leading-[14px] text-[#4472c4] ${ARIAL}`}>
        Note : I have used different charts on the right, and you can pick your favorite based on your preference. Personally I do prefer the Regular bar chart which I find clean and easier to read (the one used for # of FTE per category)
      </div>

      <div className="absolute left-[1264px] top-[38px]"><Logo /></div>
      <div className="absolute left-[666px] top-[103px] bg-[#f2f2f2]"><StackChart /></div>
      <div className="absolute left-[1150px] top-[104px] bg-[#f2f2f2]"><BarChart /></div>
      <div className="absolute left-[672px] top-[407px] bg-[#f2f2f2] border border-[#d9d9d9]"><LineChart /></div>
      <div className="absolute left-[1366px] top-[616px] w-[63px] h-[17px] border-2 border-[#217346]">
        <div className="absolute -right-[3px] -bottom-[3px] w-[5px] h-[5px] bg-[#217346] border border-white" />
      </div>
    </div>
  );
}

const ScrollBtn = ({ up }: { up?: boolean }) => (
  <div className="w-[18px] h-[18px] shrink-0 bg-white border border-[#ababab] flex items-center justify-center">
    <svg width="9" height="5" viewBox="0 0 9 5"><path d={up ? 'M0 5h9L4.5 0z' : 'M0 0h9L4.5 5z'} fill="#666" /></svg>
  </div>
);

function VScroll() {
  return (
    <div className="w-[23px] shrink-0 bg-[#e6e6e6] pl-[3px] pt-[3px] flex flex-col">
      <ScrollBtn up />
      <div className="w-[18px] h-[473px] shrink-0 bg-white border-x border-b border-[#ababab]" />
      <div className="w-[18px] flex-1 bg-[#dcdcdc]" />
      <ScrollBtn />
    </div>
  );
}

function Tabs() {
  return (
    <div className="h-[30px] shrink-0 bg-[#e6e6e6] border-t border-b border-t-[#aaa] border-b-[#c8c8c8] flex text-[16.2px] whitespace-nowrap text-[#555]">
      <div className="w-[103px] flex items-center shrink-0 pl-[27px]">
        <svg width="6" height="10" viewBox="0 0 6 10"><path d="M6 0v10L0 5z" fill="#217346" /></svg>
        <svg width="6" height="10" viewBox="0 0 6 10" className="ml-[24px]"><path d="M0 0v10l6-5z" fill="#217346" /></svg>
        <span className="ml-[19px] text-[#217346] text-[14px] font-bold">...</span>
      </div>
      <div className="w-px bg-[#aaa] h-[24px] mt-[2px]" />
      <div className="ml-[2px] w-[192px] h-[23px] mt-[2px] pb-[3px] bg-[#5b9bd5] flex items-center justify-center text-[#1f2937] tracking-[0.4px]">--- Staff analysis <span className="ml-[4px] tracking-[2px]">&gt;&gt;&gt;</span></div>
      <div className="ml-[2px] w-px bg-[#aaa] h-[24px] mt-[2px]" />
      <div className="w-[170px] flex items-center pl-[15px] pb-[4px]">Team Organigram</div>
      <div className="w-px bg-[#aaa] h-[24px] mt-[2px]" />
      <div className="w-[241px] flex items-center pl-[17px] pb-[4px]">Employee costs breakdown</div>
      <div className="w-[236px] h-[29px] -mt-px bg-white border-x border-[#aaa] border-b-[3px] border-b-[#217346] pb-[2px] flex items-center justify-center font-bold text-[#217346]">Employee per department</div>
      <div className="w-[162px] flex items-center pl-[15px] pb-[4px]">Analysis of bon ...</div>
      <S cls="w-[20px] h-[20px] mt-[4px] rounded-full border border-[#999] text-[18px] leading-none text-[#777]">+</S>
      <div className="ml-[18px] w-[3px] h-[16px] mt-[6px] flex flex-col justify-between">
        <div className="h-[3px] bg-[#bdbdbd]" /><div className="h-[3px] bg-[#bdbdbd]" /><div className="h-[3px] bg-[#bdbdbd]" />
      </div>
      <div className="ml-[15px] mt-[4px] h-[19px] w-[19px] bg-white border border-[#ababab] flex items-center justify-center">
        <svg width="5" height="9" viewBox="0 0 5 9"><path d="M5 0v9L0 4.5z" fill="#666" /></svg>
      </div>
      <div className="mt-[4px] h-[19px] w-[667px] bg-white border-y border-r border-[#ababab]" />
      <div className="mt-[4px] h-[19px] w-[24px] bg-[#dcdcdc]" />
      <div className="mt-[4px] h-[19px] w-[19px] bg-white border border-[#ababab] flex items-center justify-center">
        <svg width="5" height="9" viewBox="0 0 5 9"><path d="M0 0v9l5-4.5z" fill="#666" /></svg>
      </div>
    </div>
  );
}

function StatusBar() {
  return (
    <div className="h-[25px] shrink-0 bg-[#f1f1f1] flex items-center text-[#444]">
      <svg width="15" height="15" viewBox="0 0 15 15" className="ml-[11px]" stroke="#666" fill="none">
        <rect x="2.5" y="2.5" width="12" height="12" fill="#fff" /><path d="M2 5h13" strokeWidth="2" /><path d="M5 8h8M5 10.5h8M5 13h8" strokeDasharray="1 1" />
        <circle cx="3" cy="3" r="2.5" fill="#666" stroke="none" />
      </svg>
      <div className="ml-[1523px] w-[49px] h-[25px] bg-[#c6c6c6] flex items-center justify-center">
        <svg width="16" height="16" viewBox="0 0 16 16" fill="none" stroke="#777"><rect x=".5" y=".5" width="15" height="15" /><path d="M5.5 0v16M10.5 0v16M0 5.5h16M0 10.5h16" /></svg>
      </div>
      <svg width="17" height="17" viewBox="0 0 17 17" fill="none" stroke="#777" className="ml-[17px]"><rect x=".5" y=".5" width="16" height="16" /><rect x="3.5" y="2.5" width="10" height="12" /><path d="M5 6h7M5 8.5h7M5 11h7" /></svg>
      <svg width="17" height="17" viewBox="0 0 17 17" fill="none" stroke="#777" className="ml-[33px]"><rect x=".5" y=".5" width="16" height="16" /><path d="M6.5 0v10.5h10M10.5 0v10.5" /></svg>
      <span className="ml-[21px] w-[8px] h-[1.5px] bg-[#555]" />
      <div className="ml-[7px] w-[126px] h-px bg-[#aaa] relative">
        <div className="absolute left-[46px] -top-[7px] w-[6px] h-[14px] bg-[#666]" />
        <div className="absolute left-[62px] -top-[3px] w-px h-[7px] bg-[#aaa]" />
      </div>
      <svg width="10" height="10" viewBox="0 0 10 10" className="ml-[5px]" stroke="#555"><path d="M5 0v10M0 5h10" /></svg>
      <span className="ml-[17px] text-[13px]">77%</span>
    </div>
  );
}

export default function App() {
  return (
    <div className="w-[1919px] h-[949px] overflow-hidden flex flex-col bg-[#f3f3f3] font-[Open_Sans,sans-serif] text-[13.7px] text-[#444]">
      <Ribbon />
      <FormulaBar />
      <div className="h-[729px] shrink-0 flex overflow-hidden">
        <Sheet />
        <VScroll />
      </div>
      <Tabs />
      <StatusBar />
      <div className="h-[2px] shrink-0 bg-[#1b3340]" />
    </div>
  );
}
